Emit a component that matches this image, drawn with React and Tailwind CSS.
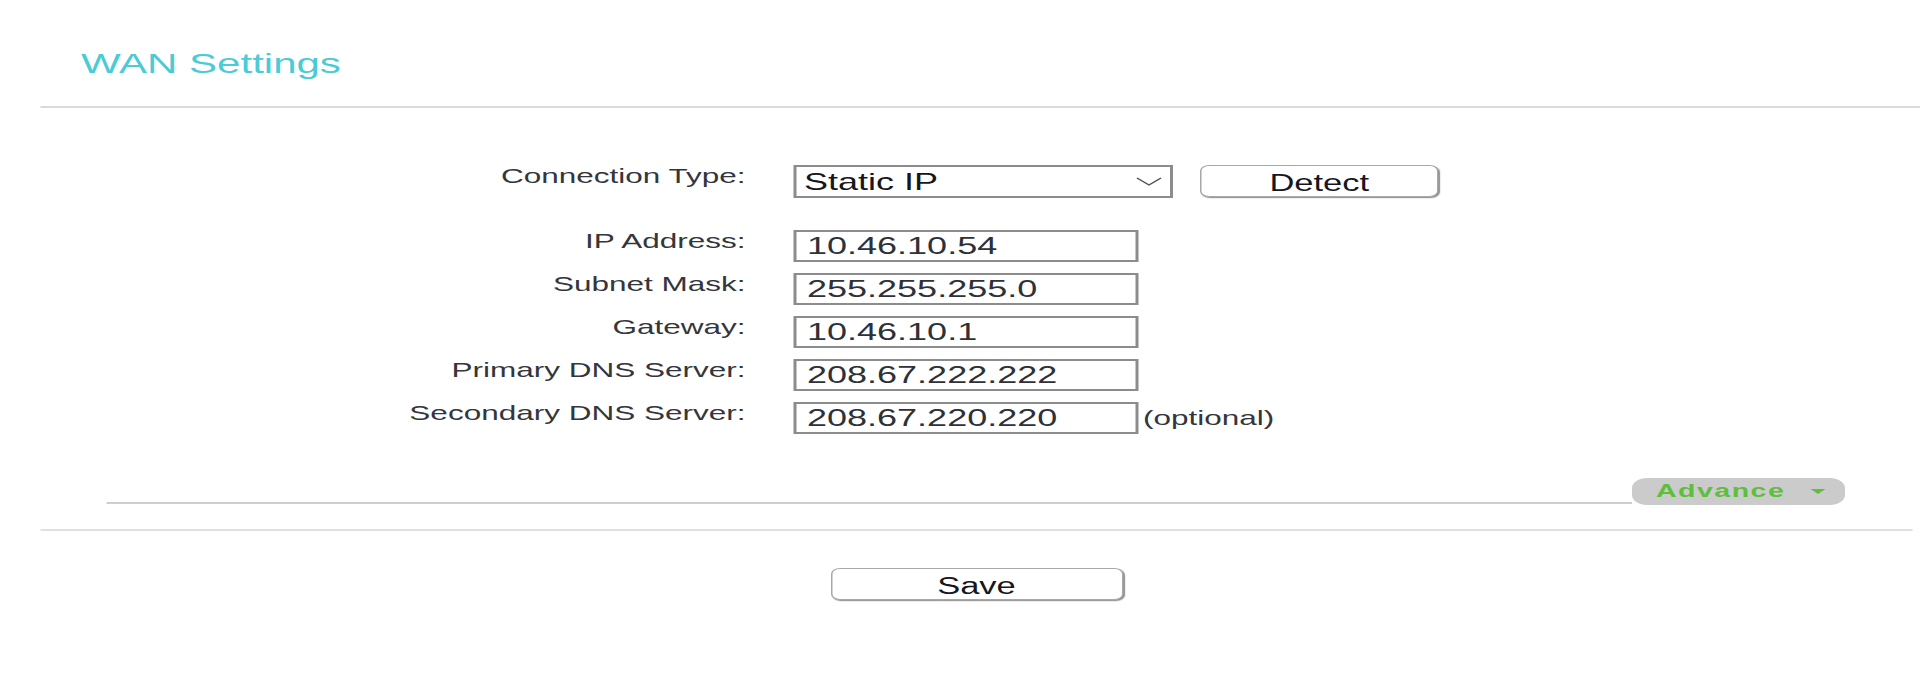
import React from 'react';

const rows = [
  { label: 'IP Address:', value: '10.46.10.54' },
  { label: 'Subnet Mask:', value: '255.255.255.0' },
  { label: 'Gateway:', value: '10.46.10.1' },
  { label: 'Primary DNS Server:', value: '208.67.222.222' },
  { label: 'Secondary DNS Server:', value: '208.67.220.220', note: '(optional)' },
];

const Label = ({ children }) => (
  <div className="w-[470px] shrink-0 pt-[1px] text-right text-[21px] leading-[20px] text-[#34363c]">{children}</div>
);

const App = () => {
  return (
    <div className="min-h-screen bg-white overflow-hidden">
      <div className="w-[1280px] origin-top-left scale-x-150 font-['Liberation_Sans',Arial,sans-serif]">
        <h1 className="pl-[54px] pt-[50px] text-[28px] leading-none font-normal text-[#4acbd6]">WAN Settings</h1>
        <div className="ml-[27px] mt-[28px] h-[2px] bg-[#dadada]" />

        <div className="ml-[27px] mr-[5px]">
          <div className="mt-[57px] flex items-start gap-[32px]">
            <Label>Connection Type:</Label>
            <div className="flex items-start">
              <div className="flex h-[33px] w-[253px] items-center justify-between border-2 border-[#8c8c8c] bg-white pl-[5px] pr-[5px] text-[24px] text-[#16161e]">
                <span>Static IP</span>
                <svg width="18" height="9" viewBox="0 0 18 9" fill="none">
                  <polyline points="1,1 9,8 17,1" stroke="#555" strokeWidth="1.1" />
                </svg>
              </div>
              <button className="ml-[18px] h-[32px] w-[159px] rounded-[6px] border border-[#a8a8a8] bg-white text-[23px] text-[#16161e] shadow-[1px_1px_1px_#8a8a8a]">
                Detect
              </button>
            </div>
          </div>

          <div className="mt-[32px] flex flex-col gap-[11px]">
            {rows.map(r => (
              <div key={r.label} className="flex items-start gap-[32px]">
                <Label>{r.label}</Label>
                <div className="flex items-center">
                  <input
                    readOnly
                    value={r.value}
                    className="h-[32px] w-[230px] border-2 border-[#8c8c8c] bg-white pl-[7px] text-[24px] text-[#2e3136] outline-none"
                  />
                  {r.note && <span className="ml-[3px] text-[21px] text-[#34363c]">{r.note}</span>}
                </div>
              </div>
            ))}
          </div>

          <div className="ml-[44px] mr-[45px] mt-[44px] flex items-end">
            <div className="mb-[1px] h-[2px] flex-1 bg-[#cfcfcf]" />
            <div className="flex h-[27px] w-[142px] items-center rounded-[10px] bg-[#cbcbcb] pl-[16px]">
              <span className="text-[19px] font-bold tracking-[1px] text-[#5dbf3c]">Advance</span>
              <span className="ml-[17px] h-0 w-0 border-x-[5px] border-t-[5px] border-x-transparent border-t-[#5dbf3c]" />
            </div>
          </div>

          <div className="mt-[24px] h-[2px] bg-[#e0e0e0]" />

          <div className="mt-[37px] flex justify-center">
            <button className="h-[32px] w-[195px] rounded-[6px] border border-[#a8a8a8] bg-white text-[23px] text-[#16161e] shadow-[1px_1px_1px_#8a8a8a]">
              Save
            </button>
          </div>
        </div>
      </div>
    </div>
  );
};

export default App;
